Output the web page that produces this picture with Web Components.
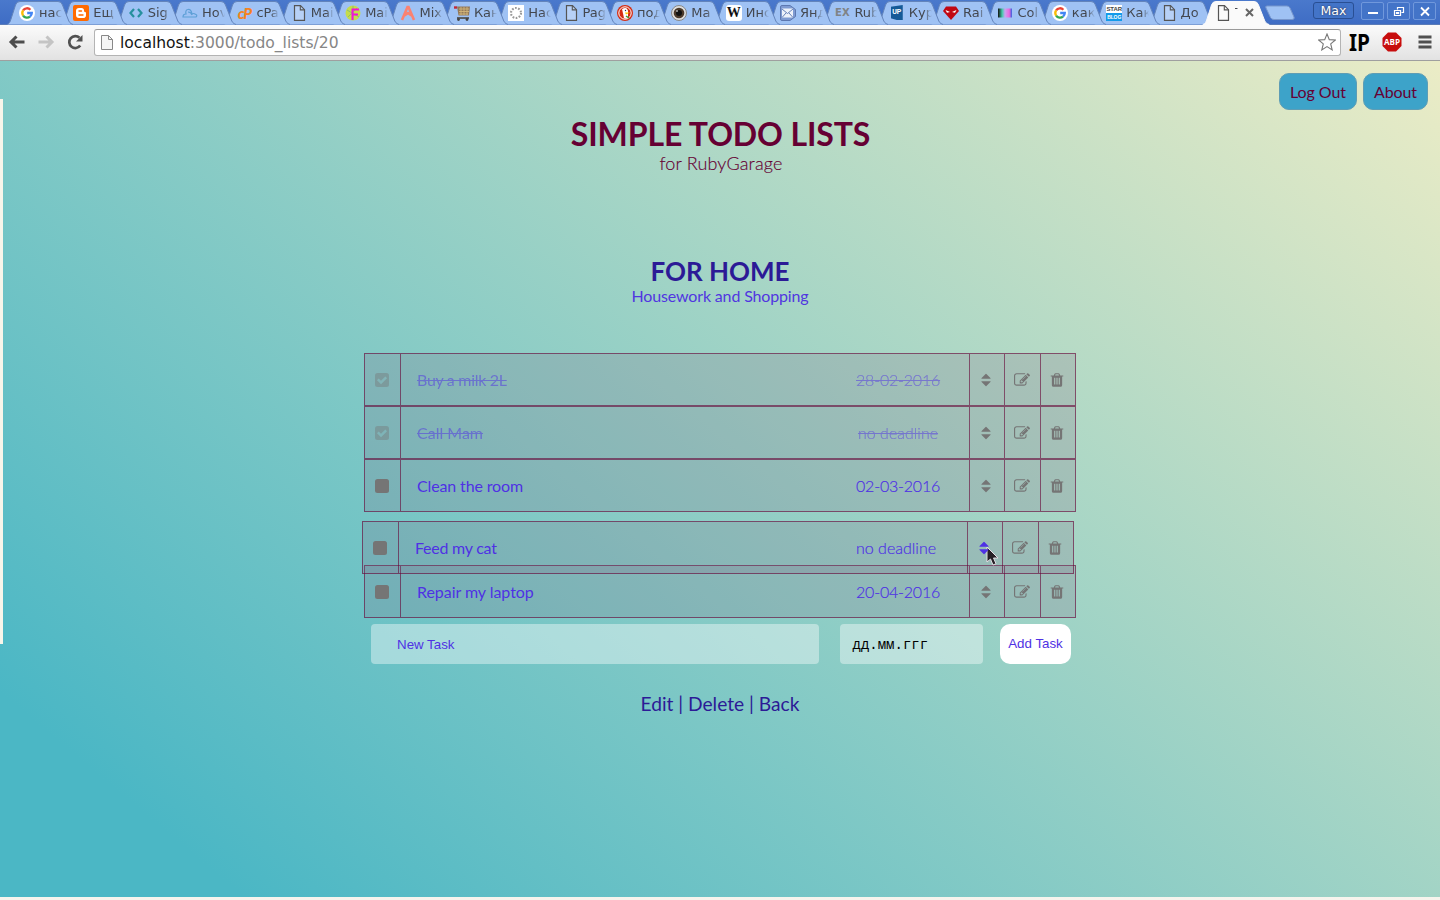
<!DOCTYPE html>
<html lang="ru">
<head>
<meta charset="utf-8">
<title>Todo lists</title>
<style>
html,body{margin:0;height:100%;overflow:hidden}
body{font-family:Lato,"Open Sans",sans-serif;background:#f6f4ed}
</style>
</head>
<body>
<browser-window url-host="localhost" url-rest=":3000/todo_lists/20">
  <todo-page>
    <nav-pill slot="nav">Log Out</nav-pill><nav-pill slot="nav">About</nav-pill>
    <task-row done date="28-02-2016" style="--track:-.3px">Buy a milk 2L</task-row>
    <task-row done date="no deadline">Call Mam</task-row>
    <task-row date="02-03-2016" style="--track:-.14px">Clean the room</task-row>
    <task-row dragging date="no deadline" style="--track:-.25px">Feed my cat</task-row>
    <task-row date="20-04-2016" style="--track:-.05px">Repair my laptop</task-row>
    <task-form slot="form"></task-form>
  </todo-page>
</browser-window>
<script>
const PAGE='<path d="M3.5.7h6l4 4v10.6h-10z" fill="#fff" fill-opacity=".25" stroke="#555" stroke-width="1.2"/><path d="M9.3.8v4.1h4" fill="none" stroke="#555" stroke-width="1.1"/>';
const GOOGLE='<circle cx="8" cy="8" r="8" fill="#fff"/><g fill="none" stroke-width="2.3"><path d="M4.1 5.4A4.7 4.7 0 0 1 11.4 4.7" stroke="#ea4335"/><path d="M4.1 5.4A4.8 4.8 0 0 0 4.1 10.6" stroke="#fbbc05"/><path d="M4.1 10.6A4.7 4.7 0 0 0 11 11.6" stroke="#34a853"/><path d="M8.2 8h4.6A4.8 4.8 0 0 1 11 11.6" stroke="#4285f4"/></g>';
const ICONS={
 google:GOOGLE,page:PAGE,
 blogger:'<rect width="16" height="16" rx="2" fill="#ff6a00"/><path d="M6 3h2.5Q11 3 11 5.500 11 7 12 7t1 1v2.200Q13 13 10 13H6Q3 13 3 10V6Q3 3 6 3z" fill="#fff"/><path d="M6 6h2.500M6 10h4" stroke="#ff6a00" stroke-width="1.400" stroke-linecap="round"/>',
 code:'<path d="M6 4 2.500 8 6 12M10 4l3.500 4L10 12" fill="none" stroke="#26909e" stroke-width="2.200"/>',
 cloud:'<path d="M1 12h13q2-2-1-3-1-1-3 0Q9 4 6 4.500T4 9Q1 9 1 12zM6 7q3 0 4 3" fill="none" stroke="#5d9fd6" stroke-width="1.200"/>',
 f:'<circle cx="8" cy="8" r="7.500" fill="#c5dc4b"/><path d="M2 5l12 7M3 12 12 3M8 1v14" stroke="#8cbd72"/><path d="M7.500 15V4.500H14M7.500 9.500H13" fill="none" stroke="#f312d8" stroke-width="2"/>',
 mix:'<path d="M2 15 7.500 2h1L14 15M4.500 10.500 8 8l3.500 2.500" fill="none" stroke="#fb8271" stroke-width="2.600"/>',
 cart:'<path d="M0 2.500h3" fill="none" stroke="#c22835" stroke-width="2.400"/><path d="M3 1.500h13l-1 9H4.500z" fill="#94795a"/><path d="M5 4h10M5 6.500h10M5 9h9M7 2v8M10 2v8M13 2v8" stroke="#d3b579" stroke-width=".9"/><path d="M3 13h12" stroke="#555" stroke-width="1.800"/><circle cx="4.500" cy="14.500" r="1.400" fill="#444"/><circle cx="13" cy="14.500" r="1.400" fill="#444"/>',
 dots:'<rect width="16" height="16" fill="#fff"/><circle cx="8" cy="8" r="5" fill="none" stroke="#999" stroke-width="2.100" stroke-dasharray="1.700 1.440"/>',
 duck:'<circle cx="8" cy="8" r="8" fill="#d52c12"/><circle cx="8" cy="8" r="6.200" fill="none" stroke="#fff"/><path d="M5 4q5-3 6 2v7q-2 1-4 0z" fill="#fff"/><path d="M8 7.500h5L9 9.500z" fill="#fc0"/><path d="M9 11l3 2" stroke="#3a9938" stroke-width="1.500"/><circle cx="8.500" cy="5.500" r=".7" fill="#235"/>',
 eye:'<circle cx="8" cy="8" r="7.500" fill="#ddd" stroke="#888"/><circle cx="8" cy="8" r="5.300" fill="#4c3a2b"/><circle cx="8" cy="8" r="3" fill="#111"/><circle cx="6" cy="6" r="1" fill="#aaa"/>',
 mail:'<path d="M2 .5h8l5.500 4v7l-5.500 4H2Q.5 15.500.5 14V2Q.5.500 2 .500z" fill="#7f9bd2" stroke="#5d78b0"/><path d="M2 3.500h11v9H2z" fill="#eef2fa"/><path d="M2 4l5.500 4.500L13 4M2 12.500 6 8M13 12.500 9 8" fill="none" stroke="#6681b8"/>',
 ruby:'<path d="M3 1.500h10l3 4.500-8 9L0 6z" fill="#c00713"/><path d="M2.500 5l4.500 2-3 .8zM13.500 5 9 7l3 .8z" fill="#fff"/>',
 color:'<defs><linearGradient id="g"><stop stop-color="#111"/><stop offset=".3" stop-color="#4ca"/><stop offset=".5" stop-color="#c9a5f2"/><stop offset=".8" stop-color="#e6d"/><stop offset="1" stop-color="#36d"/></linearGradient></defs><rect x="1" y="3.500" width="14" height="9" fill="url(#g)"/>'
};
const LETTER={
 cp:'<span style="font:italic 900 15px Lato,sans-serif;color:#f58220;letter-spacing:-1px">cP</span>',
 wiki:'<span style="font:bold 14px \'Liberation Serif\',serif;background:#fff;border-radius:3px;width:16px;height:16px;line-height:16px;text-align:center;color:#111">W</span>',
 ex:'<span style="font:bold 10px \'DejaVu Sans\',sans-serif;color:#7f8386;letter-spacing:0">EX</span>',
 up:'<span style="font:bold 7px Roboto,sans-serif;background:#155a97;color:#fff;width:12px;height:15px;line-height:15px;text-align:center;clip-path:polygon(0 12%,100% 0,100% 100%,50% 100%,0 88%)">UP</span>',
 star:'<span style="font:bold 6px/8px \'Liberation Sans\',sans-serif;background:linear-gradient(#fff 50%,#139bea 50%);color:#444;width:16px;text-align:center;letter-spacing:-.1px">STAR<br><b style="color:#fff;font-size:5px;display:block;height:8px">BLOG</b></span>'
};
const root=(el,html)=>{el.attachShadow({mode:'open'}).innerHTML=html};

customElements.define('browser-tab',class extends HTMLElement{connectedCallback(){
 const on=this.hasAttribute('active'),k=this.getAttribute('icon');
 root(this,`<style>:host{display:block;position:relative;flex:0 0 54.36px;height:25px}
 .s{position:absolute;left:-1px;top:0;overflow:visible}
 .c{position:relative;display:flex;align-items:center;gap:4px;padding-left:11px;height:25px}
 .i{flex:0 0 16px;height:16px;display:flex;align-items:center;justify-content:center}.i span{display:block}
 .t{width:${on?3:23}px;overflow:hidden;white-space:nowrap;font:13px "DejaVu Sans",sans-serif;color:#43474f;-webkit-mask:linear-gradient(90deg,#000 65%,transparent)}
 .x{flex:none;margin-left:3px}</style>
 <svg class="s" width="67" height="26"><path d="M0 24.500C2.500 23.500 3 22 4 19L8.500 5Q9.500 1.500 13 1.500H51Q54.500 1.500 55.500 5L61 19C62 22 63 23.500 66 24.500${on?'V26H0Z':''}" fill="${on?'#fafafa':'#9fc2f4'}" stroke="${on?'#fafafa':'#6384bb'}"/></svg>
 <div class="c"><div class="i">${LETTER[k]||`<svg width="16" height="16">${ICONS[k]}</svg>`}</div><div class="t"><slot></slot></div>${on?'<svg class="x" width="9" height="9"><path d="M1 1l7 7M8 1 1 8" stroke="#666" stroke-width="2"/></svg>':''}</div>`)}});

customElements.define('tab-strip',class extends HTMLElement{connectedCallback(){
 const T=[['google','нас'],['blogger','Ещ'],['code','Sig'],['cloud','Hov'],['cp','cPa'],['page','Mai'],['f','Mai'],['mix','Mix'],['cart','Кан'],['dots','Нас'],['page','Pag'],['duck','под'],['eye','Ма'],['wiki','Инс'],['mail','Янд'],['ex','Rub'],['up','Кур'],['ruby','Rai'],['color','Col'],['google','как'],['star','Как'],['page','До']];
 root(this,`<style>:host{display:flex;height:25px;box-sizing:border-box;padding-left:8px;background:linear-gradient(#4a79cc,#3e6cc4);box-shadow:inset 0 -1px #5b7cb8}
 .n{flex:none;margin:5px 0 0 6px}.sp{flex:1}
 .w{display:flex;gap:3px;padding:2px 4px 0 0}
 .b{box-sizing:border-box;height:18px;width:23px;border:1px solid #7098dc;border-radius:2px;display:flex;align-items:center;justify-content:center;background:#4374c8}
 .m{width:41px;border-color:#294f93;margin:0 4px 0 0;height:17px;font:12.500px "DejaVu Sans",sans-serif;color:#fff;text-shadow:0 0 2px #223;border-radius:3px}</style>
 ${T.map((t,i)=>`<browser-tab icon="${t[0]}" style="z-index:${30-i}">${t[1]}</browser-tab>`).join('')}<browser-tab active icon="page" style="z-index:40">T</browser-tab>
 <svg class="n" width="34" height="16"><path d="M3 1h20q2 0 3 2l4 9q1 2.500-2 2.500H10q-2.500 0-3.500-2L2 3Q1 1 3 1z" fill="#9fc2f4" stroke="#7897cc"/></svg><span class="sp"></span>
 <div class="w"><div class="b m">Max</div>
 <div class="b"><svg width="12" height="11"><path d="M1 7h10" stroke="#fff" stroke-width="2"/></svg></div>
 <div class="b"><svg width="12" height="11"><path d="M4.500 3.500v-2h6v5h-2M1.500 4.500h6v5h-6zM3.500 6.500h2v1h-2z" fill="none" stroke="#fff" stroke-width="1.200"/></svg></div>
 <div class="b"><svg width="12" height="11"><path d="M2 1.500l8 8M10 1.500l-8 8" stroke="#fff" stroke-width="1.800"/></svg></div></div>`)}});

customElements.define('browser-window',class extends HTMLElement{connectedCallback(){
 root(this,`<style>:host{display:flex;flex-direction:column;height:900px;width:1440px}
 .bar{flex:none;box-sizing:border-box;height:36px;display:flex;align-items:center;background:linear-gradient(#fbfbfb,#e2e2e2);border-bottom:1px solid #9f9f9f;padding:0 8px 1px 8px}
 .nav{display:flex;gap:11px;width:86px;flex:none}
 .url{flex:1;box-sizing:border-box;height:27px;border:1px solid #b4b4b4;border-top-color:#999;border-radius:3px;background:#fff;display:flex;align-items:center;font:15.550px "DejaVu Sans",sans-serif;padding:0 4px;color:#868686}
 .url b{font-weight:400;color:#111}.url span{flex:1;margin-left:5px;padding-top:2px}
 .ip{margin:0 13px 0 9px;overflow:visible}
 .abp{overflow:visible}
 .m{margin-left:16px}</style>
 <tab-strip></tab-strip><div class="bar"><div class="nav">
 <svg width="18" height="16"><path d="M8.500 2.500 3 8l5.500 5.500M3 8h13.500" fill="none" stroke="#4d4d4d" stroke-width="3"/></svg>
 <svg width="18" height="16"><path d="M9.500 2.500 15 8l-5.500 5.500M15 8H1.500" fill="none" stroke="#c4c4c4" stroke-width="3"/></svg>
 <svg width="20" height="16"><path d="M14.200 11.500A6 6 0 1 1 13.500 3.800" fill="none" stroke="#505050" stroke-width="2.700"/><path d="M16.500 1v6.500H10z" fill="#505050"/></svg></div>
 <div class="url"><svg width="16" height="18"><path d="M2.500 2.500h7l4 4v10h-11z" fill="#f5f5f5" stroke="#888"/><path d="M9.500 2.500v4h4" fill="none" stroke="#888"/></svg><span><b>${this.getAttribute('url-host')}</b>${this.getAttribute('url-rest')}</span>
 <svg width="18" height="18"><path d="M9 1l2.300 5.600 6.100.4-4.700 3.900 1.500 6L9 13.600 3.800 16.900l1.500-6L.6 7l6.100-.4z" fill="#fff" stroke="#777" stroke-width="1.100"/></svg></div>
 <svg class="ip" width="19" height="30"><text x="-1" y="23.500" textLength="21" lengthAdjust="spacingAndGlyphs" font-family="Noto Sans,sans-serif" font-size="23.500" font-weight="700">IP</text></svg>
 <svg class="abp" width="20" height="20"><path d="M6 .5h8L19.500 6v8L14 19.500H6L.5 14V6z" fill="#c70d0d"/><text x="10" y="13.300" text-anchor="middle" textLength="16" lengthAdjust="spacingAndGlyphs" font-family="Open Sans,sans-serif" font-size="9.500" font-weight="700" fill="#fff">ABP</text></svg>
 <svg class="m" width="14" height="14"><path d="M.5 2h13M.5 7h13M.5 12h13" stroke="#505050" stroke-width="3"/></svg></div>
 <slot></slot>`)}});

customElements.define('nav-pill',class extends HTMLElement{connectedCallback(){
 root(this,`<style>:host{box-sizing:border-box;display:flex;align-items:center;height:37px;padding:0 10px;border:1px solid #5e9db5;border-radius:10px;background:#3da3c9;color:#603;font-size:16px;letter-spacing:-.08px}</style><slot></slot>`)}});

customElements.define('todo-page',class extends HTMLElement{connectedCallback(){
 root(this,`<style>:host{display:block;position:relative;height:836px;background:linear-gradient(40deg,#4bb7c5 10%,#ebecc6 100%)}
 nav{display:flex;justify-content:flex-end;gap:6px;padding:12px 12px 0 0}
 h1,h2,p{margin:0;text-align:center}
 h1{font-size:32px;line-height:40px;margin-top:4px;padding-left:1px;color:#603;letter-spacing:-.13px}
 .s1{font-size:18px;font-weight:300;line-height:20px;margin-top:-1px;padding-left:2px;color:#603;letter-spacing:.15px;-webkit-text-stroke:.15px #603}
 h2{font-size:26px;line-height:32px;margin-top:82px;color:#2c1a96}
 .s2{font-size:16px;line-height:20px;color:#5136e0;margin:-1px 0 47px;letter-spacing:-.15px}
 main{width:712px;margin:0 auto}
 .l{font-size:19.200px;line-height:24px;color:#2c1a96;margin-top:28px}
 .side{position:absolute;left:0;top:38px;width:3px;height:545px;background:#f8f5ea}
 .cur{position:absolute;left:986px;top:485px}</style>
 <nav><slot name="nav"></slot></nav><h1>SIMPLE TODO LISTS</h1><p class="s1">for RubyGarage</p>
 <h2>FOR HOME</h2><p class="s2">Housework and Shopping</p>
 <main><slot></slot><slot name="form"></slot></main><p class="l">Edit | Delete | Back</p>
 <div class="side"></div>
 <svg class="cur" width="14" height="21"><path d="M1 1v15l3.500-3 2.500 6 3-1.300L7.500 12H12z" fill="#111" stroke="#fff"/></svg>`)}});

const FA={
 sort:'<path transform="translate(384 0)" d="M1024 1088q0 26-19 45l-448 448q-19 19-45 19t-45-19l-448-448q-19-19-19-45t19-45 45-19h896q26 0 45 19t19 45zm0-384q0 26-19 45t-45 19h-896q-26 0-45-19t-19-45 19-45l448-448q19-19 45-19t45 19l448 448q19 19 19 45z"/>',
 edit:'<path d="M888 1184l116-116-152-152-116 116v56h96v96h56zm440-720q-16-16-33 1l-350 350q-17 17-1 33t33-1l350-350q17-17 1-33zm80 594v190q0 119-84.500 203.500t-203.500 84.500h-832q-119 0-203.500-84.500t-84.500-203.500v-832q0-119 84.500-203.500t203.500-84.500h832q63 0 117 25 15 7 18 23 3 17-9 29l-49 49q-14 14-32 8-23-6-45-6h-832q-66 0-113 47t-47 113v832q0 66 47 113t113 47h832q66 0 113-47t47-113v-126q0-13 9-22l64-64q15-15 35-7t20 29zm-96-738l288 288-672 672h-288v-288zm444 132l-92 92-288-288 92-92q28-28 68-28t68 28l152 152q28 28 28 68t-28 68z"/>',
 trash:'<path d="M704 1376v-704q0-14-9-23t-23-9h-64q-14 0-23 9t-9 23v704q0 14 9 23t23 9h64q14 0 23-9t9-23zm256 0v-704q0-14-9-23t-23-9h-64q-14 0-23 9t-9 23v704q0 14 9 23t23 9h64q14 0 23-9t9-23zm256 0v-704q0-14-9-23t-23-9h-64q-14 0-23 9t-9 23v704q0 14 9 23t23 9h64q14 0 23-9t9-23zm-544-992h448l-48-117q-7-9-17-11h-317q-10 2-17 11zm928 32v64q0 14-9 23t-23 9h-96v948q0 83-47 143.500t-113 60.500h-832q-66 0-113-58.500t-47-141.500v-952h-96q-14 0-23-9t-9-23v-64q0-14 9-23t23-9h309l70-167q15-37 54-63t79-26h320q40 0 79 26t54 63l70 167h309q14 0 23 9t9 23z"/>'
};
customElements.define('task-row',class extends HTMLElement{connectedCallback(){
 const ic=k=>`<div class="i ${k}"><svg width="16" height="16" viewBox="0 0 1792 1792">${FA[k]}</svg></div>`;
 const done=this.hasAttribute('done');
 root(this,`<style>:host{display:grid;grid-template-columns:35px 1fr 121px 35px 36px 35px;box-sizing:border-box;height:53px;border:1px solid rgba(102,0,51,.6);background:rgba(128,100,128,.2);color:#4f31e4;font-size:16px;position:relative;line-height:20px}
 :host([dragging]){left:-2px;top:9px;z-index:1}
 div{display:flex;align-items:center;box-sizing:border-box}
 .n,.i{border-left:1px solid rgba(102,0,51,.6)}
 .c,.i{justify-content:center;padding-right:1px}.i{padding-top:1px}.sort,.trash{padding-right:2px}.n{padding-left:16px;letter-spacing:var(--track,0)}
 .d{font-weight:300;padding-left:8px;letter-spacing:-.2px;-webkit-text-stroke:.2px currentColor}
 :host([date="no deadline"]) .d{padding-left:10px;letter-spacing:0}
 :host([done]) span{text-decoration:line-through;opacity:.5}
 :host([done]) .c{opacity:.4}
 svg{fill:#757575}:host([dragging]) .sort svg{fill:#4f31e4}
 </style><div class="c"><svg width="14" height="14"><path fill-rule="evenodd" d="M2.500 0h9Q14 0 14 2.500v9Q14 14 11.500 14h-9Q0 14 0 11.500v-9Q0 0 2.500 0z${done?'M6 11.200l6-6-1.700-1.700L6 7.800 3.700 5.500 2 7.200z':''}"/></svg></div><div class="n"><span><slot></slot></span></div><div class="d"><span>${this.getAttribute('date')}</span></div>${ic('sort')}${ic('edit')}${ic('trash')}`)}});

customElements.define('task-form',class extends HTMLElement{connectedCallback(){
 root(this,`<style>:host{display:flex;height:40px;margin:6px 5px 0 7px;font:13.333px "Liberation Sans",sans-serif;color:#4f31e4}
 div{display:flex;align-items:center;box-sizing:border-box;border-radius:4px;background:rgba(255,255,255,.4)}
 .a{width:448px;padding:1px 0 0 26px}.b{width:143px;margin:0 17px 0 21px;padding:1px 0 0 12.500px;color:#000;font:14px "Liberation Mono",monospace}
 .c{width:71px;background:#fff;border-radius:10px;justify-content:center;padding-bottom:1px}</style><div class="a">New Task</div><div class="b">дд.мм.ггг</div><div class="c">Add Task</div>`)}});
</script>
</body>
</html>
